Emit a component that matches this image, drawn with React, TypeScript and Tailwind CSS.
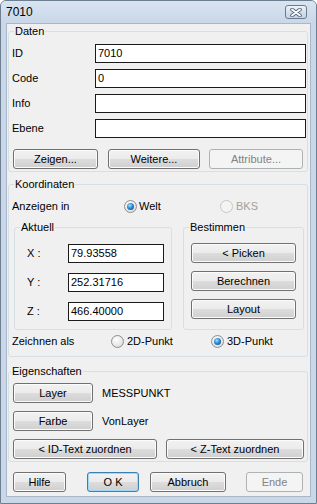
import React from "react";

type BtnProps = {
  w: string;
  children: React.ReactNode;
  disabled?: boolean;
  isDefault?: boolean;
  extra?: string;
};

function Btn({ w, children, disabled, isDefault, extra = "" }: BtnProps) {
  let cls =
    "h-[20px] rounded-[3px] border flex items-center justify-center leading-[13px] shrink-0 ";
  if (disabled) {
    cls += "border-[#adb2b5] bg-[#f4f4f4] text-[#838383]";
  } else if (isDefault) {
    cls +=
      "border-[#3c7fb1] bg-[linear-gradient(to_bottom,#f2f2f2_0%,#ebebeb_50%,#dddddd_50%,#cfcfcf_100%)] shadow-[inset_0_0_0_1px_#9fd7f7] text-black";
  } else {
    cls +=
      "border-[#707070] bg-[linear-gradient(to_bottom,#f2f2f2_0%,#ebebeb_50%,#dddddd_50%,#cfcfcf_100%)] shadow-[inset_0_0_0_1px_#fbfbfb] text-black";
  }
  return <div className={`${cls} ${w} ${extra}`}>{children}</div>;
}

function Radio({ checked, disabled }: { checked?: boolean; disabled?: boolean }) {
  return (
    <span
      className={`w-[13px] h-[13px] rounded-full border flex items-center justify-center shrink-0 ${
        disabled
          ? "border-[#c6c6c6] bg-[#f4f4f4]"
          : "border-[#8e8f8f] bg-[radial-gradient(circle_at_40%_35%,#ffffff_0%,#e6e6e6_60%,#cfcfcf_100%)]"
      }`}
    >
      {checked && (
        <span className="w-[7px] h-[7px] rounded-full bg-[radial-gradient(circle_at_40%_35%,#a6e3ff_0%,#2d8ad6_45%,#0b3f7e_100%)]" />
      )}
    </span>
  );
}

function Input({ w, value }: { w: string; value?: string }) {
  return (
    <div
      className={`h-[19px] border border-[#1a1a1a] bg-white flex items-center pl-[2px] leading-[13px] shrink-0 ${w}`}
    >
      {value}
    </div>
  );
}

function Group({
  label,
  labelLeft,
  className,
  children,
}: {
  label: string;
  labelLeft: string;
  className: string;
  children: React.ReactNode;
}) {
  return (
    <div className={`relative border border-[#d5dfe5] rounded-[3px] flex flex-col ${className}`}>
      <span
        className={`absolute top-[-8px] bg-[#f0f0f0] px-[1px] leading-[14px] ${labelLeft}`}
      >
        {label}
      </span>
      {children}
    </div>
  );
}

export default function App() {
  return (
    <div className="w-[317px] h-[504px] bg-[#c9d7e8] border border-[#6f7f92] rounded-t-[6px] flex flex-col font-['Liberation_Sans',Arial,sans-serif] text-[11px] text-black overflow-hidden">
      {/* Title bar */}
      <div className="h-[22px] shrink-0 flex items-center justify-between pl-[5px] pr-[9px] bg-[linear-gradient(to_bottom,#d9e4f1_0%,#c9d7e8_100%)]">
        <span className="text-[12px] text-black">7010</span>
        <div className="w-[22px] h-[14px] rounded-[3px] border border-[#6b7b8e] bg-[linear-gradient(to_bottom,#eef3f9_0%,#d6e0ec_50%,#c6d3e3_100%)] flex items-center justify-center">
          <svg width="12" height="9" viewBox="0 0 12 9">
            <path d="M2 1.5 L10 7.5 M10 1.5 L2 7.5" stroke="#56667a" strokeWidth="3.6" strokeLinecap="round" />
            <path d="M2 1.5 L10 7.5 M10 1.5 L2 7.5" stroke="#ffffff" strokeWidth="1.8" strokeLinecap="round" />
          </svg>
        </div>
      </div>

      {/* Client area */}
      <div className="mx-[5px] mb-[6px] flex-1 bg-[#f0f0f0] border border-[#a9b8c9] flex flex-col">
        {/* Daten */}
        <Group label="Daten" labelLeft="left-[5px]" className="ml-[1px] mt-[7px] w-[300px] pt-[12px] pb-[2px]">
          <div className="flex flex-col gap-[6px] pl-[3px]">
            {[
              ["ID", "7010"],
              ["Code", "0"],
              ["Info", ""],
              ["Ebene", ""],
            ].map(([l, v]) => (
              <div key={l} className="flex items-center">
                <span className="w-[83px] shrink-0">{l}</span>
                <Input w="w-[211px]" value={v} />
              </div>
            ))}
          </div>
          <div className="flex mt-[11px] pl-[4px]">
            <Btn w="w-[85px]">Zeigen...</Btn>
            <Btn w="w-[92px]" extra="ml-[10px]">Weitere...</Btn>
            <Btn w="w-[94px]" extra="ml-[9px]" disabled>
              Attribute...
            </Btn>
          </div>
        </Group>

        {/* Koordinaten */}
        <Group label="Koordinaten" labelLeft="left-[5px]" className="ml-[1px] mt-[12px] w-[300px] pt-[12px] pb-[5px]">
          <div className="flex items-center h-[19px] pl-[3px]">
            <span className="w-[112px] shrink-0">Anzeigen in</span>
            <div className="flex items-center gap-[2px] w-[96px] shrink-0">
              <Radio checked />
              <span>Welt</span>
            </div>
            <div className="flex items-center gap-[3px] text-[#a0a0a0]">
              <Radio disabled />
              <span>BKS</span>
            </div>
          </div>

          <div className="flex items-stretch mt-[11px]">
            <Group label="Aktuell" labelLeft="left-[5px]" className="ml-[5px] w-[158px] pt-[16px] pb-[8px]">
              <div className="flex flex-col gap-[10px] pl-[12px]">
                {[
                  ["X :", "79.93558"],
                  ["Y :", "252.31716"],
                  ["Z :", "466.40000"],
                ].map(([l, v]) => (
                  <div key={l} className="flex items-center">
                    <span className="w-[41px] shrink-0">{l}</span>
                    <Input w="w-[96px]" value={v} />
                  </div>
                ))}
              </div>
            </Group>
            <Group label="Bestimmen" labelLeft="left-[5px]" className="ml-[11px] w-[121px] pt-[15px]">
              <div className="flex flex-col gap-[8px] pl-[7px]">
                <Btn w="w-[105px]">&lt; Picken</Btn>
                <Btn w="w-[105px]">Berechnen</Btn>
                <Btn w="w-[105px]">Layout</Btn>
              </div>
            </Group>
          </div>

          <div className="flex items-center h-[19px] mt-[2px] pl-[3px]">
            <span className="w-[99px] shrink-0">Zeichnen als</span>
            <div className="flex items-center gap-[3px] w-[100px] shrink-0">
              <Radio />
              <span>2D-Punkt</span>
            </div>
            <div className="flex items-center gap-[3px]">
              <Radio checked />
              <span>3D-Punkt</span>
            </div>
          </div>
        </Group>

        {/* Eigenschaften */}
        <Group label="Eigenschaften" labelLeft="left-[2px]" className="ml-[1px] mt-[14px] w-[300px] pt-[11px] pb-[2px]">
          <div className="flex flex-col gap-[8px] pl-[4px]">
            <div className="flex items-center">
              <Btn w="w-[80px]">Layer</Btn>
              <span className="ml-[9px]">MESSPUNKT</span>
            </div>
            <div className="flex items-center">
              <Btn w="w-[80px]">Farbe</Btn>
              <span className="ml-[9px]">VonLayer</span>
            </div>
            <div className="flex items-center">
              <Btn w="w-[144px]">&lt; ID-Text zuordnen</Btn>
              <Btn w="w-[138px]" extra="ml-[9px]">
                &lt; Z-Text zuordnen
              </Btn>
            </div>
          </div>
        </Group>

        {/* Bottom buttons */}
        <div className="flex mt-[10px] pl-[6px]">
          <Btn w="w-[53px]">Hilfe</Btn>
          <Btn w="w-[52px]" extra="ml-[21px]" isDefault>
            O K
          </Btn>
          <Btn w="w-[76px]" extra="ml-[11px]">Abbruch</Btn>
          <Btn w="w-[57px]" extra="ml-[20px]" disabled>
            Ende
          </Btn>
        </div>
      </div>
    </div>
  );
}
